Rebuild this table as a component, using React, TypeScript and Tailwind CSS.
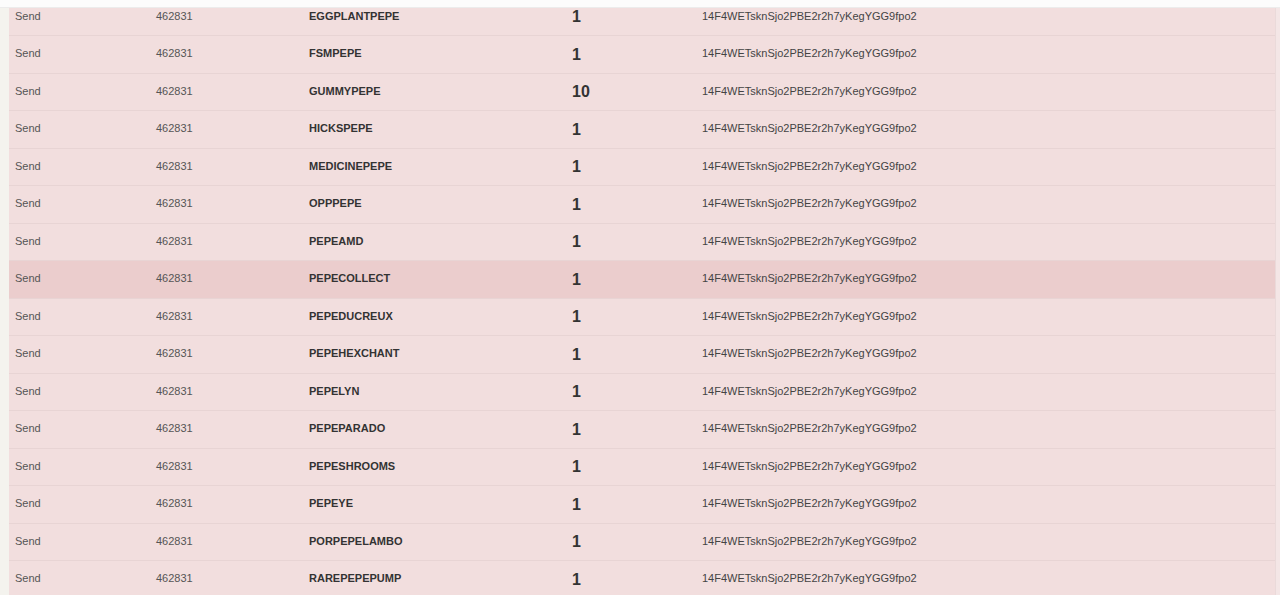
import React from "react";

const names: [string, string][] = [
  ["EGGPLANTPEPE", "1"],
  ["FSMPEPE", "1"],
  ["GUMMYPEPE", "10"],
  ["HICKSPEPE", "1"],
  ["MEDICINEPEPE", "1"],
  ["OPPPEPE", "1"],
  ["PEPEAMD", "1"],
  ["PEPECOLLECT", "1"],
  ["PEPEDUCREUX", "1"],
  ["PEPEHEXCHANT", "1"],
  ["PEPELYN", "1"],
  ["PEPEPARADO", "1"],
  ["PEPESHROOMS", "1"],
  ["PEPEYE", "1"],
  ["PORPEPELAMBO", "1"],
  ["RAREPEPEPUMP", "1"],
];

export default function App() {
  return (
    <div
      className="relative h-[595px] w-[1280px] overflow-hidden bg-[#f5f4ef]"
      style={{ fontFamily: '"Liberation Sans", Arial, sans-serif' }}
    >
      <div className="absolute left-0 right-0 top-0 z-10 h-[8px] border-b border-[#ececec] bg-[#fcfcfc]" />
      <div className="flex h-full">
        <div className="w-[9px] shrink-0 bg-[#f4f3ee]" />
        <div className="mt-[-1.5px] flex-1 bg-[#f2dede]">
          {names.map(([n, q], i) => (
            <div
              key={n}
              className={`grid h-[37.5px] grid-cols-[141px_153px_263px_130px_1fr] items-center border-b border-[#e8d4d4] pb-[2px] pl-[6px] text-[11px] ${
                i === 7 ? "bg-[#ebcdcd]" : "bg-[#f2dede]"
              }`}
            >
              <div className="text-[#555]">Send</div>
              <div className="text-[#555]">462831</div>
              <div className="font-bold text-[#333]">{n}</div>
              <div className="pt-[3px] text-[16px] font-bold leading-none text-[#333]">{q}</div>
              <div className="text-[#444]">14F4WETsknSjo2PBE2r2h7yKegYGG9fpo2</div>
            </div>
          ))}
        </div>
        <div className="w-[5px] shrink-0 border-l border-[#eadada] bg-[#f4e6e6]" />
      </div>
    </div>
  );
}
